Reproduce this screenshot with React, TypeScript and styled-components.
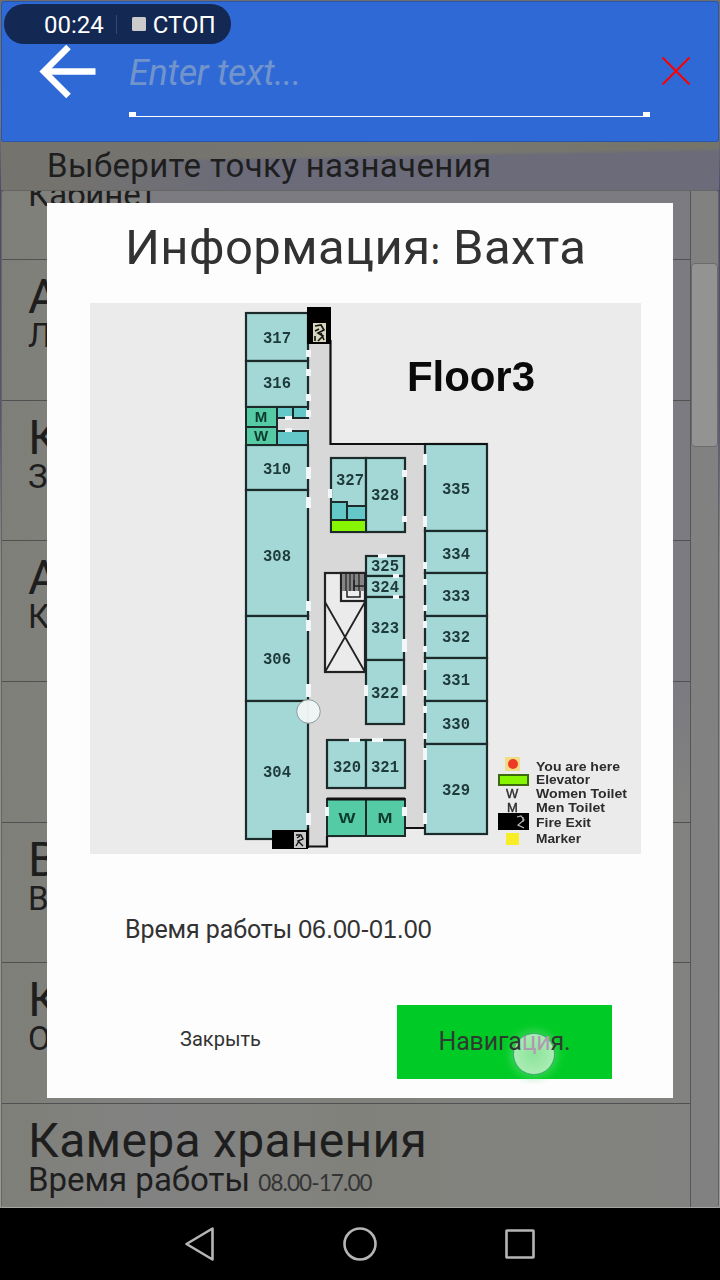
import React from "react";
import styled, { createGlobalStyle } from "styled-components";

const Global = createGlobalStyle`
  * { box-sizing: border-box; }
  html, body { margin: 0; padding: 0; background: #000; }
  body { font-family: Roboto, "Liberation Sans", sans-serif; }
`;

const Screen = styled.div`
  position: relative;
  width: 720px;
  height: 1280px;
  overflow: hidden;
  display: flex;
  flex-direction: column;
  background: #000;
`;

const Page = styled.main`
  height: 1208px;
  padding: 1px 1px 0;
  display: flex;
  flex-direction: column;
  background: linear-gradient(180deg, #6f6e6a 0, #77787a 120px, #4c4b6c 190px, #55557a 420px, #8b8b88 560px, #9a9a96 100%);
`;

const Header = styled.header`
  height: 141px;
  flex: none;
  display: flex;
  align-items: flex-start;
  padding: 42px 28px 0 37px;
  border: 1px solid #2a55a8;
  border-radius: 3px;
  width: 718px;
  background: #2f69d6;
`;

const BackIcon = styled.svg`
  width: 60px;
  height: 56px;
  flex: none;
`;

const SearchField = styled.div`
  width: 521px;
  height: 73px;
  margin-left: 30px;
  flex: none;
  display: flex;
  flex-direction: column;
  justify-content: space-between;
`;

const Placeholder = styled.span`
  padding-top: 8px;
  font-size: 36px;
  line-height: 42px;
  font-style: italic;
  letter-spacing: -0.3px;
  color: #7294cd;
  white-space: nowrap;
`;

const Underline = styled.div`
  height: 5px;
  border: solid #fff;
  border-width: 0 0 1px;
  background:
    linear-gradient(#fff, #fff) 0 0 / 7px 4px no-repeat,
    linear-gradient(#fff, #fff) 100% 0 / 7px 4px no-repeat;
`;

const ClearIcon = styled.svg`
  width: 30px;
  height: 30px;
  margin: 12px 0 0 11px;
  flex: none;
`;

const Prompt = styled.div`
  height: 48px;
  flex: none;
  padding: 5px 0 0 46px;
  font-size: 33px;
  line-height: 38px;
  letter-spacing: 0.35px;
  color: #1e1e1e;
  background:
    linear-gradient(90deg, #74736e 8%, #74736e00 34%),
    linear-gradient(178.9deg, #6b695f00 0 32%, #6b6b7a 38%),
    linear-gradient(90deg, #74736e, #77776f 60%, #74746b);
`;

const ListArea = styled.div`
  height: 1018px;
  flex: none;
  width: 718px;
  display: flex;
  overflow: hidden;
  border: 1px solid #656563;
  border-width: 1px 0 1px 1px;
  border-bottom-color: #a5a5a2;
  border-radius: 3px;
`;

const Rows = styled.div`
  width: 688px;
  height: 1016px;
  overflow: hidden;
  display: flex;
  flex-direction: column;
  justify-content: flex-end;
  background:
    linear-gradient(180deg, #7b7b81 0 500px, #7b7b8100 620px) 100% 0 / 540px 620px no-repeat,
    linear-gradient(90deg, #7f7f79, #828282 22%, #81817c 50%, #828280);
`;

const Row = styled.div`
  height: 140.7px;
  flex: none;
  padding: 9px 0 0 26px;
  border-top: 1.4px solid #515151;
  color: #1e1e1e;
  white-space: nowrap;
`;

const LastRow = styled(Row)`
  height: 104px;
`;

const RowTitle = styled.div`
  height: 55px;
  font-size: 48px;
  line-height: 56px;
  letter-spacing: 0.3px;
`;

const RowNote = styled.div`
  height: 34px;
  margin-top: -7px;
  font-size: 33px;
  line-height: 38px;
`;

const Hours = styled.span`
  font-family: Lato, sans-serif;
  font-size: 22.5px;
  letter-spacing: -0.9px;
  color: #343434;
`;

const ScrollTrack = styled.div`
  width: 29px;
  flex: none;
  padding-top: 72px;
  border-left: 1px solid #555;
  border-right: 1px solid #626262;
  background: #818181;
`;

const ScrollThumb = styled.div`
  height: 184px;
  border: 1px solid #6b6b6b;
  border-radius: 4px;
  background: #939393;
`;

const NavBar = styled.nav`
  height: 72px;
  display: flex;
  justify-content: center;
  align-items: center;
  gap: 124px;
`;

const NavIcon = styled.svg`
  width: 36px;
  height: 36px;
  fill: none;
  stroke: #b5b5b5;
  stroke-width: 2.6;
  stroke-linejoin: round;
`;

const Recorder = styled.div`
  position: absolute;
  left: 4px;
  top: 4px;
  width: 227px;
  height: 40px;
  border-radius: 20px;
  padding: 1px 0 0 40px;
  display: flex;
  align-items: center;
  background: #132853;
  color: #fff;
  font-size: 24px;
  line-height: 40px;
  white-space: nowrap;
`;

const RecDivider = styled.span`
  width: 1px;
  height: 19px;
  margin: 0 15px 0 12px;
  background: #38496f;
`;

const StopSquare = styled.span`
  width: 14px;
  height: 14px;
  margin: -2px 7px 0 0;
  border-radius: 1.5px;
  background: #cbcbcb;
`;

const Dialog = styled.section`
  position: absolute;
  left: 47px;
  top: 203px;
  width: 626px;
  height: 895px;
  background: #fdfdfd;
  color: #323232;
  display: flex;
  flex-direction: column;
`;

const DialogTitle = styled.h1`
  margin: 0;
  height: 100px;
  padding: 16px 0 0 78px;
  font-size: 49px;
  line-height: 58px;
  font-weight: 400;
  letter-spacing: 0.4px;
  white-space: nowrap;
`;

const Colon = styled.span`
  font-family: "Noto Sans", sans-serif;
  font-size: 36px;
`;

const FloorMap = styled.svg`
  width: 551px;
  height: 551px;
  margin-left: 43px;
  flex: none;
  font-family: "Liberation Sans", sans-serif;
  font-weight: 700;
`;

const WorkHours = styled.p`
  margin: 60px 0 0 78px;
  height: 30px;
  font-size: 25px;
  line-height: 30px;
  letter-spacing: -0.1px;
  white-space: nowrap;
`;

const Digits = styled.span`
  font-family: "Liberation Sans", sans-serif;
  letter-spacing: 0;
`;

const Actions = styled.div`
  margin-top: 61px;
  height: 74px;
  display: flex;
`;

const CloseButton = styled.button`
  width: 173px;
  margin-left: 87px;
  padding: 0 0 6px;
  border: 0;
  background: none;
  color: #323232;
  font: 400 20px/24px Roboto, sans-serif;
`;

const GoButton = styled.button`
  position: relative;
  width: 215px;
  margin-left: 90px;
  padding: 0;
  border: 0;
  background: #00cb26;
  color: #303a30;
  font: 400 25px/30px Roboto, sans-serif;
  letter-spacing: -0.2px;
`;

const GoLabel = styled.span`
  position: relative;
`;

const Lit = styled.span`
  color: #b09ab2;
`;

const Touch = styled.span`
  position: absolute;
  left: 116px;
  top: 28px;
  width: 42px;
  height: 42px;
  border-radius: 50%;
  border: 1.5px solid #48a97c;
  background: radial-gradient(circle, #8ce39a 0, #b2efba 90%);
  box-shadow: 0 0 7px 4px rgba(100, 220, 120, 0.45);
`;

const INK = "#1d2a2a";
const ROOM = "#a4d8d7";
const TEAL = "#65c8c8";
const GREEN = "#55cba5";
const LIME = "#87f500";

type Room = { n: string; x: number; y: number; w: number; h: number; tx: number; ty: number };

const rooms: Room[] = [
  { n: "317", x: 246, y: 313, w: 62, h: 48, tx: 277, ty: 343 },
  { n: "316", x: 246, y: 361, w: 62, h: 46, tx: 277, ty: 388 },
  { n: "310", x: 246, y: 445, w: 62, h: 45, tx: 277, ty: 474 },
  { n: "308", x: 246, y: 490, w: 62, h: 126, tx: 277, ty: 561 },
  { n: "306", x: 246, y: 616, w: 62, h: 85, tx: 277, ty: 664 },
  { n: "304", x: 246, y: 701, w: 62, h: 138, tx: 277, ty: 777 },
  { n: "327", x: 331, y: 458, w: 35, h: 74, tx: 350, ty: 485 },
  { n: "328", x: 366, y: 458, w: 39, h: 74, tx: 385, ty: 500 },
  { n: "325", x: 366, y: 556, w: 38, h: 20, tx: 385, ty: 571 },
  { n: "324", x: 366, y: 576, w: 38, h: 21, tx: 385, ty: 592 },
  { n: "323", x: 366, y: 597, w: 38, h: 63, tx: 385, ty: 633 },
  { n: "322", x: 366, y: 660, w: 38, h: 64, tx: 385, ty: 698 },
  { n: "320", x: 327, y: 740, w: 39, h: 48, tx: 347, ty: 772 },
  { n: "321", x: 366, y: 740, w: 39, h: 48, tx: 385, ty: 772 },
  { n: "335", x: 425, y: 444, w: 62, h: 87, tx: 456, ty: 494 },
  { n: "334", x: 425, y: 531, w: 62, h: 42, tx: 456, ty: 559 },
  { n: "333", x: 425, y: 573, w: 62, h: 43, tx: 456, ty: 601 },
  { n: "332", x: 425, y: 616, w: 62, h: 42, tx: 456, ty: 642 },
  { n: "331", x: 425, y: 658, w: 62, h: 43, tx: 456, ty: 685 },
  { n: "330", x: 425, y: 701, w: 62, h: 43, tx: 456, ty: 729 },
  { n: "329", x: 425, y: 744, w: 62, h: 90, tx: 456, ty: 795 },
];

/* Door openings: x, y, width, height */
const doors: number[][] = [
  [306, 350, 5, 7], [306, 369, 5, 7], [306, 394, 5, 7], [306, 410, 5, 7],
  [306, 467, 5, 12], [306, 497, 5, 11], [306, 601, 5, 10], [306, 620, 5, 11],
  [306, 684, 5, 13], [306, 813, 5, 12],
  [285, 416, 7, 4], [285, 428, 7, 4],
  [328, 489, 4, 9], [402, 470, 5, 7], [402, 516, 5, 6],
  [378, 554, 9, 4], [393, 574, 6, 4], [393, 595, 6, 4],
  [402, 639, 5, 13], [402, 685, 5, 11], [364, 685, 4, 11],
  [349, 738, 11, 4], [372, 738, 11, 4], [325, 807, 4, 9], [402, 807, 5, 9],
  [423, 454, 4, 11], [423, 516, 4, 11], [423, 562, 4, 7],
  [423, 579, 4, 6], [423, 605, 4, 6], [423, 621, 4, 7], [423, 646, 4, 6],
  [423, 663, 4, 7], [423, 690, 4, 6], [423, 706, 4, 7], [423, 733, 4, 6],
  [423, 748, 4, 12], [423, 813, 4, 11],
];

const legend: [string, number, number][] = [
  ["You are here", 771, 84],
  ["Elevator", 784, 54],
  ["Women Toilet", 798, 91],
  ["Men Toilet", 812, 69],
  ["Fire Exit", 827, 55],
  ["Marker", 843, 45],
];

const Plan = () => (
  <FloorMap viewBox="90 303 551 551">
    <defs>
      <filter id="soft" x="-5%" y="-5%" width="110%" height="110%" colorInterpolationFilters="sRGB">
        <feGaussianBlur stdDeviation="0.75" />
      </filter>
    </defs>
    <rect x="90" y="303" width="551" height="551" fill="#ebebeb" />
    <g filter="url(#soft)">
      <path d="M308 313H330V444H425V828H405V836L327 838V846H308Z" fill="#d8d8d8" />
      <g stroke={INK} strokeWidth="2.2">
        {rooms.map((r) => (
          <rect key={r.n} x={r.x} y={r.y} width={r.w} height={r.h} fill={ROOM} />
        ))}
      </g>
      <g stroke={INK} strokeWidth="2">
        <rect x="277" y="407" width="16" height="11" fill={TEAL} />
        <rect x="293" y="407" width="15" height="11" fill={TEAL} />
        <rect x="277" y="431" width="31" height="14" fill={TEAL} />
        <rect x="246" y="407" width="31" height="20" fill={GREEN} />
        <rect x="246" y="427" width="31" height="18" fill={GREEN} />
        <rect x="331" y="502" width="16" height="18" fill={TEAL} />
        <rect x="347" y="506" width="19" height="14" fill={TEAL} />
        <rect x="331" y="520" width="35" height="12" fill={LIME} />
        <rect x="327" y="799" width="39" height="37" fill={GREEN} />
        <rect x="366" y="799" width="39" height="37" fill={GREEN} />
      </g>
      <rect x="278" y="419.5" width="32" height="10" fill="#dcdcdc" />
      <path d="M330.5 340V444H487M405 828H425M308 846.5H327V836M308 828V848" fill="none" stroke="#111" strokeWidth="2.2" />
      <path d="M327 799H405" stroke="#111" strokeWidth="3" />
      <g fill="none" stroke="#222" strokeWidth="2.2">
        <rect x="325" y="573" width="40" height="99" fill="#ebebeb" />
        <path d="M325 602L365 672M365 602L325 672" strokeWidth="1.8" />
        <rect x="341" y="573" width="24" height="28" fill="#eee" />
        <rect x="342" y="574" width="22" height="17" fill="#858585" stroke="none" />
        <path d="M346 574V591M350 574V591M354 574V591M359 574V591" strokeWidth="1.2" />
        <path d="M354 586H365M354 580V591M347 591V597H360V591" strokeWidth="1.5" />
      </g>
      <g fill="#f4f7f7">
        {doors.map(([x, y, w, h], i) => (
          <rect key={i} x={x} y={y} width={w} height={h} />
        ))}
      </g>
      <rect x="307" y="307" width="24" height="37" />
      <rect x="313" y="323" width="13" height="19" fill="#d8d5bd" />
      <path d="M315 326L321 325L324 330L318 333L323 336L318 341M315 331L319 329M321 333L324 340M315 336V341" fill="none" stroke="#111" strokeWidth="1.6" />
      <rect x="272" y="830" width="36" height="19" />
      <rect x="294" y="832" width="12" height="16" fill="#c8c8c8" />
      <path d="M296 835H301L303 839L298 841L303 846M299 841L296 846M297 838L300 836" fill="none" stroke="#111" strokeWidth="1.4" />

      <g fontSize="17" textAnchor="middle" fill="#1f3a3b" fontFamily="Liberation Mono, monospace">
        {rooms.map((r) => (
          <text key={r.n} x={r.tx} y={r.ty} textLength="28" lengthAdjust="spacingAndGlyphs">
            {r.n}
          </text>
        ))}
      </g>
      <g fontSize="15" textAnchor="middle" fill="#0d3a2c">
        <text x="261" y="422">M</text>
        <text x="261" y="441">W</text>
        <text x="347" y="823" textLength="17" lengthAdjust="spacingAndGlyphs">W</text>
        <text x="385" y="823" textLength="15" lengthAdjust="spacingAndGlyphs">M</text>
      </g>
      <text x="407" y="391" fontSize="42" fill="#0a0a0a" textLength="128" lengthAdjust="spacing">
        Floor3
      </text>

      <rect x="505" y="757" width="15" height="14" fill="#f1dc88" />
      <circle cx="513" cy="764" r="5" fill="#ee3a24" />
      <rect x="499" y="775" width="29" height="10" fill={LIME} stroke="#3d6a10" strokeWidth="2" />
      <g fontSize="13" fill="#2c2c2c">
        <g fontWeight="400" stroke="#2c2c2c" strokeWidth="0.4">
          <text x="506" y="798">W</text>
          <text x="507" y="812">M</text>
        </g>
        {legend.map(([label, y, len]) => (
          <text key={label} x="536" y={y} textLength={len} lengthAdjust="spacingAndGlyphs">
            {label}
          </text>
        ))}
      </g>
      <rect x="498" y="813" width="31" height="17" />
      <path d="M517 817L521 816L524 820L518 825L524 828M523 817V822" fill="none" stroke="#bbb" strokeWidth="1.2" />
      <rect x="506" y="833" width="13" height="12" fill="#f7ee28" />
    </g>
    <circle cx="308.5" cy="711.5" r="11.8" fill="#eff5f5" fillOpacity="0.97" stroke="#8c9c9c" strokeWidth="1" />
  </FloorMap>
);

const items = [
  { title: "", note: "Кабинет" },
  { title: "Актовый зал", note: "Лекционный зал" },
  { title: "Касса", note: "Зал" },
  { title: "Архив", note: "Кабинет" },
  { title: "", note: "" },
  { title: "Вахта", note: "Время работы" },
  { title: "Кафедра", note: "Отдел" },
];

export default function App() {
  return (
    <>
      <Global />
      <Screen>
        <Page>
          <Header>
            <BackIcon viewBox="0 0 60 56" fill="none" stroke="#fff" strokeWidth="6.5">
              <path d="M29.5 3L5 27.5L29.5 52" strokeLinejoin="miter" strokeLinecap="butt" />
              <path d="M6 27.5H56.5" />
            </BackIcon>
            <SearchField>
              <Placeholder>Enter text...</Placeholder>
              <Underline />
            </SearchField>
            <ClearIcon viewBox="0 0 30 30" stroke="#ff0000" strokeWidth="2">
              <path d="M1.5 1.5L28.5 28.5M28.5 1.5L1.5 28.5" />
            </ClearIcon>
          </Header>
          <Prompt>Выберите точку назначения</Prompt>
          <ListArea>
            <Rows>
              {items.map((item, i) => (
                <Row key={i}>
                  <RowTitle>{item.title}</RowTitle>
                  <RowNote>{item.note}</RowNote>
                </Row>
              ))}
              <LastRow>
                <RowTitle>Камера хранения</RowTitle>
                <RowNote>
                  Время работы <Hours>08.00-17.00</Hours>
                </RowNote>
              </LastRow>
            </Rows>
            <ScrollTrack>
              <ScrollThumb />
            </ScrollTrack>
          </ListArea>
        </Page>
        <NavBar>
          <NavIcon viewBox="0 0 36 36">
            <path d="M30.5 2.5V33.5L4.5 18Z" />
          </NavIcon>
          <NavIcon viewBox="0 0 36 36">
            <circle cx="18" cy="18" r="15.5" />
          </NavIcon>
          <NavIcon viewBox="0 0 36 36">
            <rect x="4.5" y="4.5" width="27" height="27" rx="0.5" />
          </NavIcon>
        </NavBar>
        <Dialog>
          <DialogTitle>
            Информация<Colon>:</Colon> Вахта
          </DialogTitle>
          <Plan />
          <WorkHours>
            Время работы <Digits>06.00-01.00</Digits>
          </WorkHours>
          <Actions>
            <CloseButton>Закрыть</CloseButton>
            <GoButton>
              <Touch />
              <GoLabel>
                Навига<Lit>ци</Lit>я.
              </GoLabel>
            </GoButton>
          </Actions>
        </Dialog>
        <Recorder>
          00:24
          <RecDivider />
          <StopSquare />
          СТОП
        </Recorder>
      </Screen>
    </>
  );
}
